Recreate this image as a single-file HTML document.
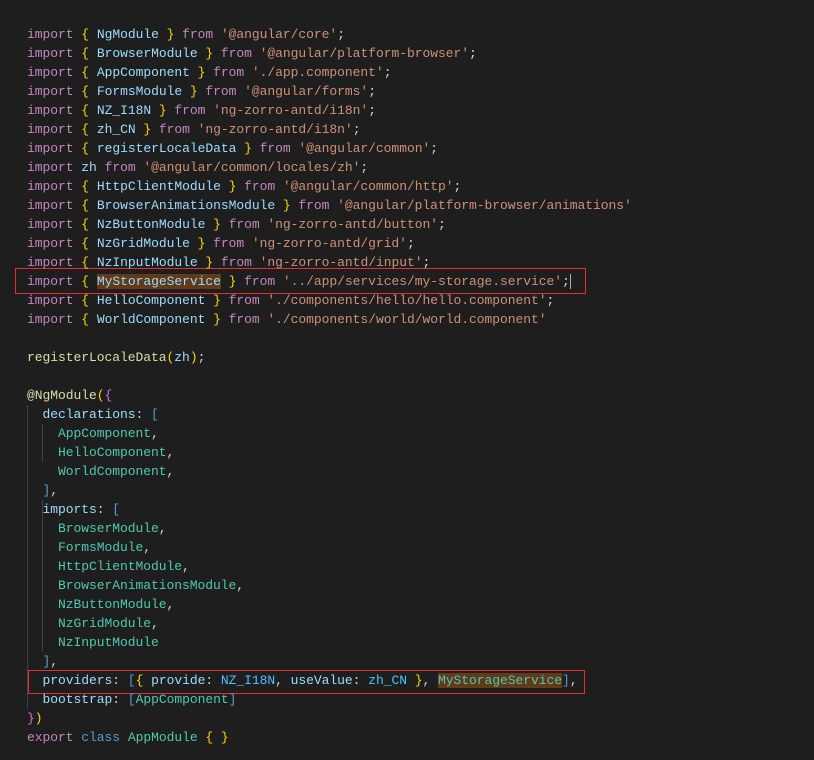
<!DOCTYPE html>
<html><head><meta charset="utf-8"><style>
html,body{margin:0;padding:0;background:#1e1e1e;width:814px;height:760px;overflow:hidden}
pre{position:absolute;left:27px;top:25px;margin:0;font-family:"Liberation Mono",monospace;font-size:13px;line-height:19px;color:#d4d4d4;letter-spacing:-0.05px}
.k{color:#c586c0}.v{color:#9cdcfe}.s{color:#ce9178}.f{color:#dcdcaa}.c{color:#4ec9b0}.b{color:#569cd6}.y{color:#ffd700}.p{color:#da70d6}.hl{background:#613a1a}.cn{color:#4fc1ff}
.box{position:absolute;border:1px solid #e0302f}
.g{position:absolute;width:1px;background:#404040}
</style></head><body>
<div class="g" style="left:27px;top:405px;height:304px"></div>
<div class="g" style="left:42px;top:424px;height:38px"></div>
<div class="g" style="left:42px;top:500px;height:152px"></div>
<div class="box" style="left:15px;top:268px;width:569px;height:24px"></div>
<div class="box" style="left:28px;top:670px;width:555px;height:22px"></div>
<pre><span class="k">import</span> <span class="y">{</span> <span class="v">NgModule</span> <span class="y">}</span> <span class="k">from</span> <span class="s">'@angular/core'</span>;
<span class="k">import</span> <span class="y">{</span> <span class="v">BrowserModule</span> <span class="y">}</span> <span class="k">from</span> <span class="s">'@angular/platform-browser'</span>;
<span class="k">import</span> <span class="y">{</span> <span class="v">AppComponent</span> <span class="y">}</span> <span class="k">from</span> <span class="s">'./app.component'</span>;
<span class="k">import</span> <span class="y">{</span> <span class="v">FormsModule</span> <span class="y">}</span> <span class="k">from</span> <span class="s">'@angular/forms'</span>;
<span class="k">import</span> <span class="y">{</span> <span class="v">NZ_I18N</span> <span class="y">}</span> <span class="k">from</span> <span class="s">'ng-zorro-antd/i18n'</span>;
<span class="k">import</span> <span class="y">{</span> <span class="v">zh_CN</span> <span class="y">}</span> <span class="k">from</span> <span class="s">'ng-zorro-antd/i18n'</span>;
<span class="k">import</span> <span class="y">{</span> <span class="v">registerLocaleData</span> <span class="y">}</span> <span class="k">from</span> <span class="s">'@angular/common'</span>;
<span class="k">import</span> <span class="v">zh</span> <span class="k">from</span> <span class="s">'@angular/common/locales/zh'</span>;
<span class="k">import</span> <span class="y">{</span> <span class="v">HttpClientModule</span> <span class="y">}</span> <span class="k">from</span> <span class="s">'@angular/common/http'</span>;
<span class="k">import</span> <span class="y">{</span> <span class="v">BrowserAnimationsModule</span> <span class="y">}</span> <span class="k">from</span> <span class="s">'@angular/platform-browser/animations'</span>
<span class="k">import</span> <span class="y">{</span> <span class="v">NzButtonModule</span> <span class="y">}</span> <span class="k">from</span> <span class="s">'ng-zorro-antd/button'</span>;
<span class="k">import</span> <span class="y">{</span> <span class="v">NzGridModule</span> <span class="y">}</span> <span class="k">from</span> <span class="s">'ng-zorro-antd/grid'</span>;
<span class="k">import</span> <span class="y">{</span> <span class="v">NzInputModule</span> <span class="y">}</span> <span class="k">from</span> <span class="s">'ng-zorro-antd/input'</span>;
<span class="k">import</span> <span class="y">{</span> <span class="v hl">MyStorageService</span> <span class="y">}</span> <span class="k">from</span> <span class="s">'../app/services/my-storage.service'</span>;<span style="border-left:1px solid #aeafad"></span>
<span class="k">import</span> <span class="y">{</span> <span class="v">HelloComponent</span> <span class="y">}</span> <span class="k">from</span> <span class="s">'./components/hello/hello.component'</span>;
<span class="k">import</span> <span class="y">{</span> <span class="v">WorldComponent</span> <span class="y">}</span> <span class="k">from</span> <span class="s">'./components/world/world.component'</span>

<span class="f">registerLocaleData</span><span class="y">(</span><span class="v">zh</span><span class="y">)</span>;

<span class="f">@NgModule</span><span class="y">(</span><span class="p">{</span>
  <span class="v">declarations</span>: <span class="b">[</span>
    <span class="c">AppComponent</span>,
    <span class="c">HelloComponent</span>,
    <span class="c">WorldComponent</span>,
  <span class="b">]</span>,
  <span class="v">imports</span>: <span class="b">[</span>
    <span class="c">BrowserModule</span>,
    <span class="c">FormsModule</span>,
    <span class="c">HttpClientModule</span>,
    <span class="c">BrowserAnimationsModule</span>,
    <span class="c">NzButtonModule</span>,
    <span class="c">NzGridModule</span>,
    <span class="c">NzInputModule</span>
  <span class="b">]</span>,
  <span class="v">providers</span>: <span class="b">[</span><span class="y">{</span> <span class="v">provide</span>: <span class="cn">NZ_I18N</span>, <span class="v">useValue</span>: <span class="cn">zh_CN</span> <span class="y">}</span>, <span class="c hl">MyStorageService</span><span class="b">]</span>,
  <span class="v">bootstrap</span>: <span class="b">[</span><span class="c">AppComponent</span><span class="b">]</span>
<span class="p">}</span><span class="y">)</span>
<span class="k">export</span> <span class="b">class</span> <span class="c">AppModule</span> <span class="y">{</span> <span class="y">}</span></pre>
</body></html>
